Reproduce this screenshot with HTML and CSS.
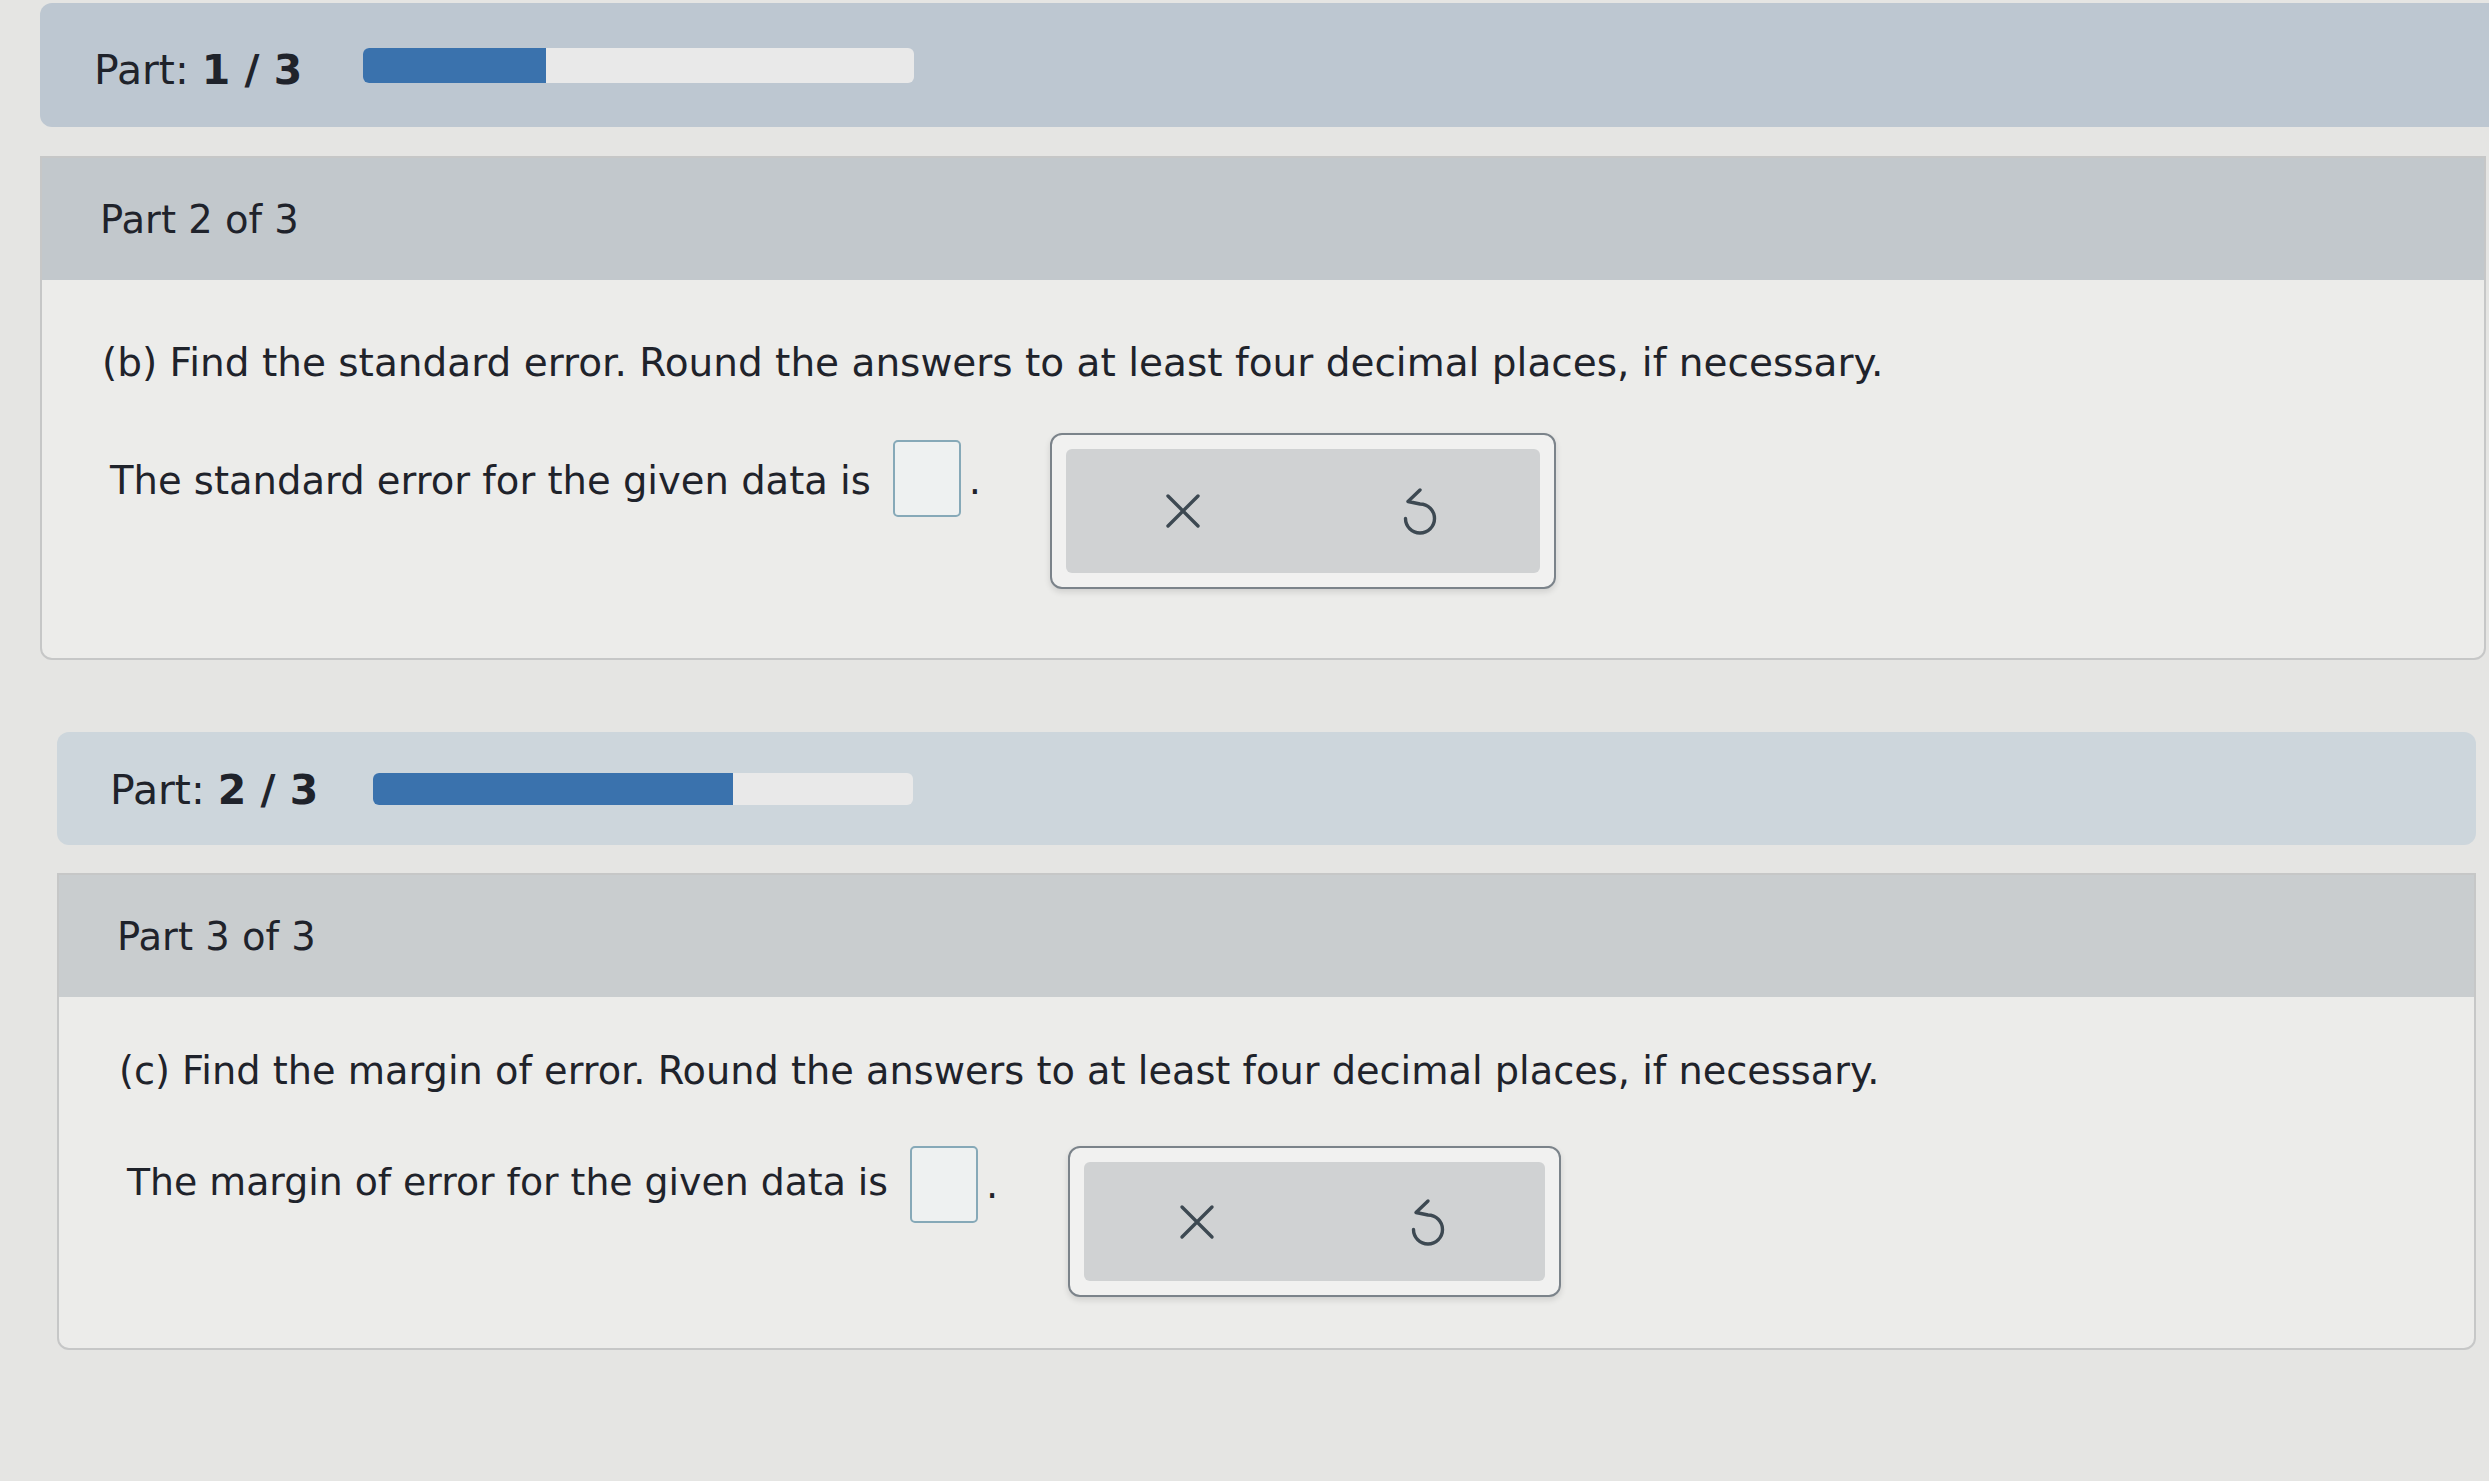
FILE: index.html
```html
<!DOCTYPE html>
<html lang="en">
<head>
    <meta charset="UTF-8">
    <title>Parts</title>
    <link rel="stylesheet" href="styles.css">
</head>
<body>
    <!-- Bagian 1 -->
    <div class="group group-one">
        <div class="part-bar">
            <span class="part-label">Part: <b>1 / 3</b></span>
            <div class="progress"><div class="progress-fill" style="width: 33.3%"></div></div>
        </div>

        <div class="card">
            <div class="card-head">Part 2 of 3</div>
            <div class="card-body">
                <p class="question">(b) Find the standard error. Round the answers to at least four decimal places, if necessary.</p>
                <div class="answer-row">
                    <span class="answer-text">The standard error for the given data is</span>
                    <span class="answer-box"></span><span class="dot">.</span>
                    <div class="keypad">
                        <div class="keypad-inner">
                            <button class="key">
                                <svg viewBox="0 0 36 36" width="36" height="36"><path d="M3 3 L33 33 M33 3 L3 33" stroke="#3d4952" stroke-width="3.4" fill="none" stroke-linecap="round"/></svg>
                            </button>
                            <button class="key">
                                <svg viewBox="0 0 44 52" width="44" height="52"><path d="M23 5 L11 16.5 L23 19 A14.5 14.5 0 1 1 8.5 33.5" stroke="#3d4952" stroke-width="3.4" fill="none" stroke-linecap="round" stroke-linejoin="round"/></svg>
                            </button>
                        </div>
                    </div>
                </div>
            </div>
        </div>
    </div>

    <!-- Bagian 2 -->
    <div class="group group-two">
        <div class="part-bar">
            <span class="part-label">Part: <b>2 / 3</b></span>
            <div class="progress"><div class="progress-fill" style="width: 66.6%"></div></div>
        </div>

        <div class="card">
            <div class="card-head">Part 3 of 3</div>
            <div class="card-body">
                <p class="question">(c) Find the margin of error. Round the answers to at least four decimal places, if necessary.</p>
                <div class="answer-row">
                    <span class="answer-text">The margin of error for the given data is</span>
                    <span class="answer-box"></span><span class="dot">.</span>
                    <div class="keypad">
                        <div class="keypad-inner">
                            <button class="key">
                                <svg viewBox="0 0 36 36" width="36" height="36"><path d="M3 3 L33 33 M33 3 L3 33" stroke="#3d4952" stroke-width="3.4" fill="none" stroke-linecap="round"/></svg>
                            </button>
                            <button class="key">
                                <svg viewBox="0 0 44 52" width="44" height="52"><path d="M23 5 L11 16.5 L23 19 A14.5 14.5 0 1 1 8.5 33.5" stroke="#3d4952" stroke-width="3.4" fill="none" stroke-linecap="round" stroke-linejoin="round"/></svg>
                            </button>
                        </div>
                    </div>
                </div>
            </div>
        </div>
    </div>
</body>
</html>
```

FILE: styles.css
```css
/* CSS */
body { margin: 0; padding: 3px 0 0; background-color: #e5e5e3; font-family: "DejaVu Sans", Verdana, sans-serif; color: #1f232b; overflow: hidden; }

.group-one { margin-left: 40px; margin-right: -20px; }
.group-two { margin-left: 57px; margin-right: 13px; margin-top: 72px; }

/* Bar progres */
.part-bar {
    display: flex;
    align-items: center;
    height: 124px;
    padding-left: 54px;
    background-color: #bdc7d1;
    border-radius: 12px;
}
.group-two .part-bar { height: 113px; padding-left: 53px; background-color: #cdd6dc; }
.part-label { font-size: 41px; width: 269px; padding-top: 10px; }
.group-two .part-label { width: 263px; padding-top: 2px; }
.part-label b { font-weight: bold; }
.progress {
    width: 551px;
    height: 35px;
    background-color: #e9e9e9;
    border-radius: 6px;
    overflow: hidden;
}
.group-two .progress { width: 540px; height: 32px; }
.progress-fill { height: 100%; background-color: #3a72ad; }

/* Kartu soal */
.card {
    margin-top: 29px;
    border: 2px solid #c6c7c7;
    border-radius: 0 0 12px 12px;
    background-color: #ececea;
}
.group-one .card { margin-right: 23px; }
.group-two .card { margin-top: 28px; }
.card-head {
    height: 122px;
    display: flex;
    align-items: center;
    padding-left: 58px;
    font-size: 38.5px;
    background-color: #c2c8cc;
}
.group-two .card-head { background-color: #c9cdcf; }
.card-body { padding: 60px 0 0 60px; height: 318px; }
.group-two .card-body { height: 300px; padding-top: 51px; }

.question { margin: 0; font-size: 39px; }
.group-two .question { font-size: 38.3px; }
.answer-row { display: flex; align-items: flex-start; margin-top: 48px; padding-left: 8px; }
.group-two .answer-row { margin-top: 53px; }
.answer-text { font-size: 38.5px; margin-top: 25px; }
.group-two .answer-text { font-size: 37.8px; margin-top: 14px; }
.answer-box {
    width: 64px;
    height: 73px;
    margin: 7px 0 0 22px;
    border: 2px solid #86a9b8;
    border-radius: 5px;
    background-color: #eef1f1;
}
.group-two .answer-box { margin-top: 0; }
.dot { font-size: 38.5px; margin: 25px 0 0 8px; }
.group-two .dot { margin-top: 16px; }

/* Keypad */
.keypad {
    margin-left: 69px;
    width: 474px;
    padding: 14px;
    border: 2px solid #7b838a;
    border-radius: 12px;
    background-color: #f1f1f0;
    box-shadow: 0 3px 6px rgba(0, 0, 0, 0.12);
}
.group-two .keypad { margin-left: 70px; width: 461px; }
.keypad-inner {
    display: flex;
    justify-content: space-between;
    height: 124px;
    padding: 0 99px 0 99px;
    background-color: #d0d2d3;
    border-radius: 6px;
}
.group-two .keypad-inner { height: 119px; padding: 0 96px 0 95px; }
.key { background: none; border: none; padding: 0; display: flex; align-items: center; cursor: pointer; }
```
